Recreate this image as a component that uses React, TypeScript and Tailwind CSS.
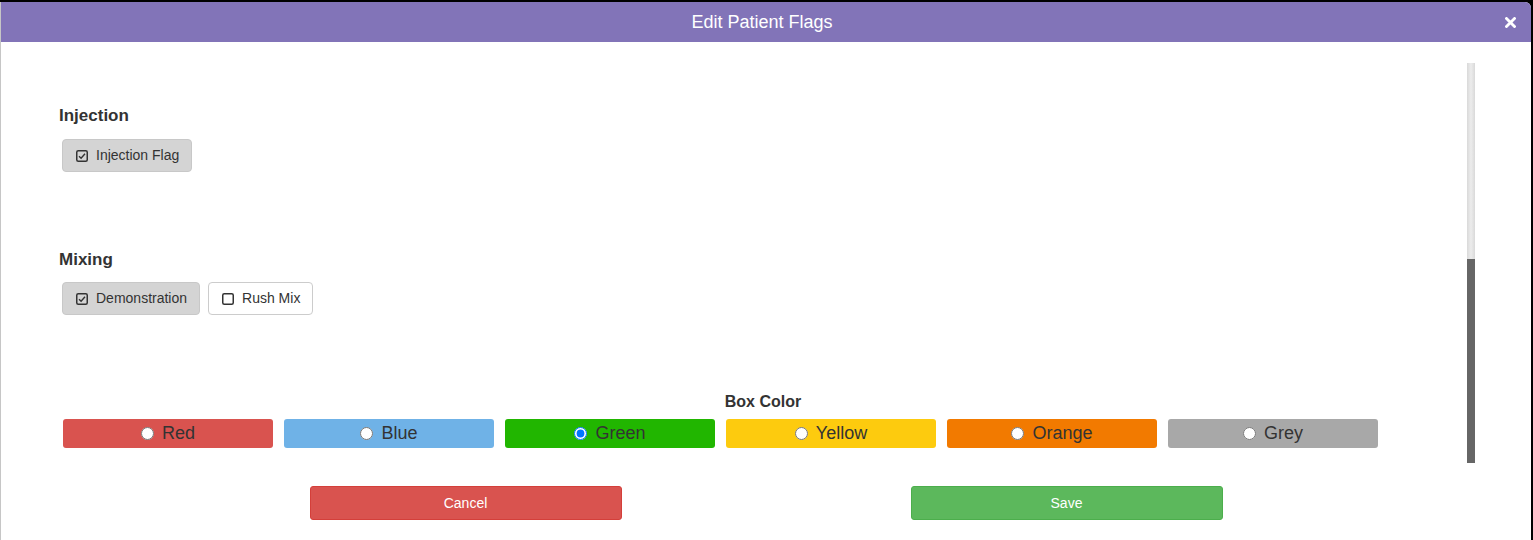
import { useState } from "react";

const FONT = { fontFamily: '"Liberation Sans", Arial, Helvetica, sans-serif' };

const BOX_COLORS = [
  { name: "Red", bg: "bg-[#d9534f]" },
  { name: "Blue", bg: "bg-[#6fb2e7]" },
  { name: "Green", bg: "bg-[#21b600]" },
  { name: "Yellow", bg: "bg-[#fdcb0e]" },
  { name: "Orange", bg: "bg-[#f27a00]" },
  { name: "Grey", bg: "bg-[#a8a8a8]" },
];

function CheckIcon(props: { checked: boolean }) {
  return (
    <svg width="12" height="12" viewBox="0 0 12 12" className="shrink-0">
      <rect x="0.75" y="0.75" width="10.5" height="10.5" rx="1.5" fill="none" stroke="#333" strokeWidth="1.5" />
      {props.checked && <path d="M3 6.2 L5.1 8.2 L9 3.8" fill="none" stroke="#333" strokeWidth="1.4" />}
    </svg>
  );
}

function FlagToggle(props: { label: string; checked: boolean; onClick: () => void }) {
  return (
    <button
      type="button"
      onClick={props.onClick}
      className={`h-[33px] flex items-center gap-[8px] pl-[13px] pr-[12px] rounded-[4px] border text-[14px] text-[#333] ${
        props.checked ? "bg-[#d4d4d4] border-[#c8c8c8]" : "bg-white border-[#cccccc]"
      }`}
    >
      <CheckIcon checked={props.checked} />
      <span>{props.label}</span>
    </button>
  );
}

export default function App() {
  const [flags, setFlags] = useState({ injection: true, demo: true, rush: false });
  const [color, setColor] = useState("Green");

  return (
    <div className="h-[540px] bg-black pt-[2px] pr-[2px] overflow-hidden" style={FONT}>
      <div className="h-full bg-white border-l border-[#c6c6c6] rounded-tr-[6px] overflow-hidden flex flex-col">
        <header className="h-[40px] shrink-0 bg-[#8274b8] flex items-center justify-center relative">
          <h1 className="text-[18px] text-white pr-[8px]">Edit Patient Flags</h1>
          <button type="button" className="absolute right-[15px] top-[15px] text-white">
            <svg width="11" height="11" viewBox="0 0 11 11">
              <path d="M1.5 1.5 L9.5 9.5 M9.5 1.5 L1.5 9.5" stroke="white" strokeWidth="2.8" strokeLinecap="square" />
            </svg>
          </button>
        </header>

        <div className="flex">
          <div className="flex-1 pl-[58px] pt-[64px]">
            <h2 className="text-[17px] leading-[20px] font-bold text-[#333]">Injection</h2>
            <div className="mt-[13px] ml-[3px] flex gap-[8px]">
              <FlagToggle
                label="Injection Flag"
                checked={flags.injection}
                onClick={() => setFlags({ ...flags, injection: !flags.injection })}
              />
            </div>

            <h2 className="mt-[78px] text-[17px] leading-[20px] font-bold text-[#333]">Mixing</h2>
            <div className="mt-[12px] ml-[3px] flex gap-[8px]">
              <FlagToggle label="Demonstration" checked={flags.demo} onClick={() => setFlags({ ...flags, demo: !flags.demo })} />
              <FlagToggle label="Rush Mix" checked={flags.rush} onClick={() => setFlags({ ...flags, rush: !flags.rush })} />
            </div>

            <h2 className="mt-[77px] text-center text-[16px] leading-[20px] font-bold text-[#333]">Box Color</h2>
            <div className="mt-[7px] ml-[4px] flex gap-[11px]">
              {BOX_COLORS.map((c) => (
                <label
                  key={c.name}
                  className={`w-[210px] h-[29px] rounded-[3px] flex items-center justify-center gap-[8px] text-[18px] text-[#333] cursor-pointer ${c.bg}`}
                >
                  <input
                    type="radio"
                    name="box-color"
                    checked={color === c.name}
                    onChange={() => setColor(c.name)}
                    className="w-[13px] h-[13px] m-0"
                  />
                  <span>{c.name}</span>
                </label>
              ))}
            </div>
          </div>

          <div className="w-[8px] mt-[21px] mr-[56px] h-[400px] flex flex-col">
            <div className="h-[196px] bg-gradient-to-r from-[#d9d9d9] via-[#ececec] to-[#d9d9d9]" />
            <div className="flex-1 bg-[#666666]" />
          </div>
        </div>

        <footer className="mt-[23px] flex justify-center gap-[289px]">
          <button type="button" className="w-[312px] h-[34px] rounded-[3px] bg-[#d9534f] border border-[#d43f3a] text-white text-[14px]">
            Cancel
          </button>
          <button type="button" className="w-[312px] h-[34px] rounded-[3px] bg-[#5cb85c] border border-[#4cae4c] text-white text-[14px]">
            Save
          </button>
        </footer>
      </div>
    </div>
  );
}
